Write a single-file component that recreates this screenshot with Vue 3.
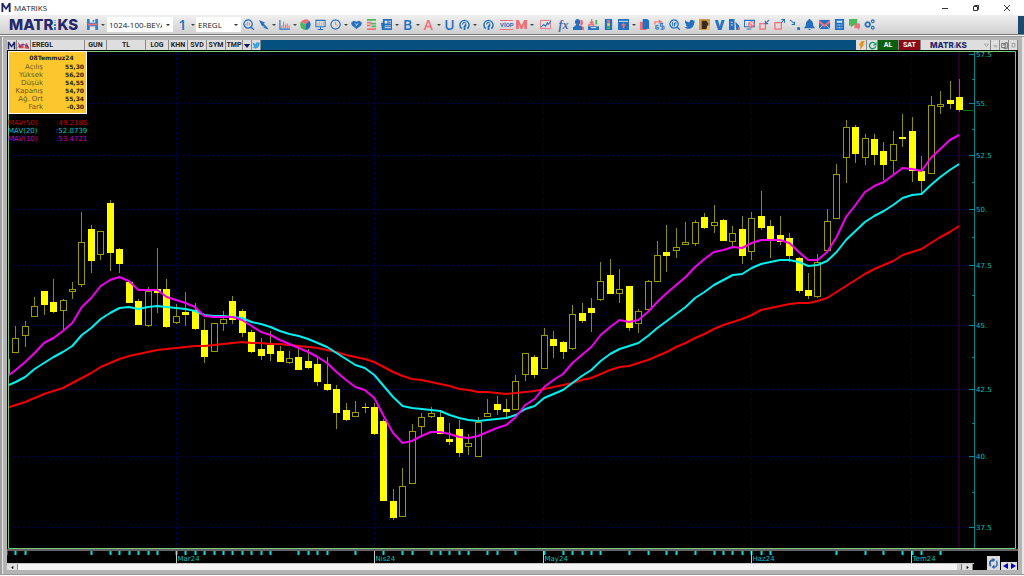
<template>
  <div class="app">
    <!-- title bar -->
    <header class="titlebar">
      <svg class="app-mark" viewBox="0 0 12 12"><path d="M1 11V1h2l3 5 3-5h2v10H9V5L6 9 3 5v6z" fill="#1f2466" /></svg>
      <span class="app-name">MATRIKS</span>
      <div class="win-buttons">
        <button aria-label="Minimize"><svg viewBox="0 0 10 10"><path d="M2 5.5h6" /></svg></button>
        <button aria-label="Restore"><svg viewBox="0 0 10 10"><path d="M2.500 3.500h4v4h-4zM3.500 3v-.500h4v4H7" /></svg></button>
        <button aria-label="Close"><svg viewBox="0 0 10 10"><path d="M2 2l6 6M8 2L2 8" /></svg></button>
      </div>
    </header>

    <!-- main toolbar -->
    <nav class="toolbar">
      <div class="brand">MATR<svg class="brand-i" viewBox="0 0 4 12"><path d="M1 1h2v1H1zM1 3h2v1H1z" fill="#5bb8e8" /><path d="M1 5h2v2H1zM1 8h2v3H1z" fill="#2f7fc4" /></svg>KS</div>
      <button class="tool drop save" aria-label="Kaydet">
        <svg class="icon" viewBox="0 0 12 12">
          <path d="M0 0h12v12H0z" fill="#2b7fd0" />
          <path d="M3 0h6v4H3z" fill="#f4f4f4" />
          <path d="M6 1h2v2H6z" fill="#2b7fd0" />
          <path d="M1 5h10v2H1z" fill="#f07078" />
          <path d="M3 8h6v4H3z" fill="#e8e8e8" />
        </svg>
        <i class="caret"></i>
      </button>
      <div class="combo page-combo">
        <select aria-label="Sayfa"><option>1024-100-BEYAZ</option></select>
      </div>
      <button class="tool drop one"><span class="glyph blue">1</span><i class="caret"></i></button>
      <div class="combo symbol-combo">
        <select aria-label="Sembol"><option>EREGL</option></select>
      </div>
      <div
        v-for="(group, g) in toolGroups"
        :key="g"
        class="tool-group"
        :class="{ even: g === toolGroups.length - 1 }"
      >
        <button v-for="t in group" :key="t.id" class="tool" :class="{ drop: t.drop }" :aria-label="t.id">
          <span v-if="t.text" class="glyph" :class="t.cls">{{ t.text }}</span>
          <svg v-else class="icon" viewBox="0 0 12 12">
            <path
              v-for="(p, i) in t.paths"
              :key="i"
              :d="p[1]"
              :fill="p[2] ? 'none' : p[0]"
              :stroke="p[2] ? p[0] : 'none'"
              :stroke-width="p[2] || 0"
            />
          </svg>
          <i v-if="t.drop" class="caret"></i>
        </button>
      </div>
      <div class="edge"></div>
    </nav>

    <!-- chart window -->
    <main class="window">
      <div class="chart-bar">
        <button class="cell mark" aria-label="M"><svg viewBox="0 0 12 12"><path d="M1 11V1h2l3 5 3-5h2v10H9V5L6 9 3 5v6z" fill="#1f2466" /></svg></button>
        <button class="cell link" aria-label="Grup">
          <svg viewBox="0 0 14 10"><path d="M1 1l3 4 3-3v6H2z" fill="#d8404c" /><path d="M8 8l2-6 3 4v3z" fill="#d8404c" /><path d="M1 7c3-4 8-4 12 0" fill="none" stroke="#334499" stroke-width="1" /></svg>
        </button>
        <button v-for="b in barCells" :key="b.text" class="cell" :class="b.cls">{{ b.text }}</button>
        <button class="cell small" aria-label="Menü"><svg viewBox="0 0 10 10"><path d="M1 3h8L5 8z" fill="#14145c" /></svg></button>
        <button class="cell small" aria-label="Twitter"><svg viewBox="0 0 12 12"><path :d="bird" fill="#35a7e0" /></svg></button>
        <div class="bar-space"></div>
        <button class="cell tiny" aria-label="Hızlı"><svg viewBox="0 0 10 10"><path d="M5 0h4L6 4h2L3 10l1-5H2z" fill="#e8920c" /></svg></button>
        <button class="cell tiny" aria-label="Yenile"><svg viewBox="0 0 10 10"><path d="M8 3a3.500 3.500 0 1 0 .5 3" fill="none" stroke="#1d9a76" stroke-width="1.600" /><path d="M9.500 1v4h-4z" fill="#1d9a76" /></svg></button>
        <button class="cell buy">AL</button>
        <button class="cell sell">SAT</button>
        <div class="bar-brand">MATR<svg class="brand-i" viewBox="0 0 4 12"><path d="M1 1h2v2H1z" fill="#5bb8e8" /><path d="M1 5h2v6H1z" fill="#2f7fc4" /></svg>KS</div>
        <button class="cell ctl" aria-label="Küçült"><svg viewBox="0 0 10 10"><path d="M2 3h6L5 7z" fill="none" stroke="#999" /></svg></button>
        <button class="cell ctl" aria-label="Simge"><svg viewBox="0 0 10 10"><path d="M3 5h4v2H3z" fill="none" stroke="#999" /></svg></button>
        <button class="cell ctl" aria-label="Düzen"><svg viewBox="0 0 10 10"><path d="M1 2h5v6H1zM3 4h3M6 1h3v8H4" fill="none" stroke="#444" /></svg></button>
        <button class="cell ctl" aria-label="Kapat"><svg viewBox="0 0 10 10"><path d="M3 2h4v5H3z" fill="none" stroke="#888" /></svg></button>
      </div>

      <section class="chart">
        <svg class="plot" viewBox="7 50 1011 514">
          <path class="grid" :d="gridPath" />
          <path class="cursor" d="M959 51V548" />
          <path class="axis" :d="axisPath" />
          <text v-for="p in prices" :key="p.y" class="axis-text" x="976" :y="p.y + 3">{{ p.label }}</text>
          <path class="last" d="M963 110.500H973" />

          <g clip-path="url(#plot-area)">
            <g v-for="(c, i) in candles" :key="i">
              <path class="wick" :class="{ now: i === candles.length - 1 }" :d="wick(c, i)" />
              <rect
                :class="c[4] ? 'down' : 'up'"
                :x="px(i) - (c[4] ? 3.500 : 3)"
                :y="c[4] ? c[1] : c[1] + 0.5"
                :width="c[4] ? 7 : 6"
                :height="Math.max(c[2] - c[1], 1)"
              />
            </g>
            <polyline class="ma red" :points="line(ma50)" />
            <polyline class="ma cyan" :points="line(ma20)" />
            <polyline class="ma magenta" :points="line(ma10)" />
          </g>
          <clipPath id="plot-area"><rect x="9" y="52" width="965" height="496" /></clipPath>

          <path class="border" d="M8.500 548.500V51.500H1015.500V548.500Z" />
          <path class="base" d="M7 550H1018" />
          <rect v-for="d in dayTicks" :key="d" class="day" :x="px(d) - 1" y="551" width="2" height="4" />
          <g v-for="m in months" :key="m.label">
            <path class="base" :d="`M${m.x} 551V563`" />
            <text class="axis-text" :x="m.x + 1" y="561">{{ m.label }}</text>
          </g>
          <path class="base" d="M7 563.500H974" />
        </svg>

        <div class="legend">
          <table class="quote">
            <caption>08Temmuz24</caption>
            <tbody>
              <tr v-for="q in quote" :key="q[0]">
                <th scope="row">{{ q[0] }}</th>
                <td>{{ q[1] }}</td>
              </tr>
            </tbody>
          </table>
          <ul class="mavs">
            <li v-for="m in mavs" :key="m.name" :class="m.cls"><span>{{ m.name }}</span><span>:{{ m.value }}</span></li>
          </ul>
        </div>
      </section>

      <footer class="scroller">
        <button class="scroll-btn" aria-label="Sola"><svg viewBox="0 0 6 6"><path d="M4 1v4L1.500 3z" /></svg></button>
        <div class="track"></div>
        <button class="thumb" aria-label="Kaydır"></button>
        <button class="scroll-btn" aria-label="Sağa"><svg viewBox="0 0 6 6"><path d="M2 1v4l2.500-2z" /></svg></button>
        <div class="corner">
          <button class="sync" aria-label="Güncelle">
            <svg viewBox="0 0 12 12"><path d="M6 2C2 2 1 6 3 9" fill="none" stroke="#2d5fa8" stroke-width="2" /><path d="M6 10c4 0 5-4 3-7" fill="none" stroke="#4a86c8" stroke-width="2" /><path d="M5 0l3 2-3 3zM7 12l-3-2 3-3z" fill="#2d5fa8" /></svg>
          </button>
          <button class="step" aria-label="Geri"><svg viewBox="0 0 7 8"><path d="M6 1v6L1 4z" /></svg></button>
          <button class="step" aria-label="İleri"><svg viewBox="0 0 7 8"><path d="M1 1v6l5-3z" /></svg></button>
        </div>
      </footer>
    </main>
  </div>
</template>

<script setup>
const B = '#2470c0'
const R = '#f0707a'
const G = '#4bb85a'

const bird = 'M0 9c2 .5 3 0 4-1-2 0-2-1-2-2h1C1 5 1 4 1 3l1 .5C1 2.500 1 2 1.500 1 3 3 4 3.500 6 3.500 6 1 9 0 10.500 2L12 1.500 11 3l1 0-1 1.500C11 9 6 13 0 9z'
const lens = [B, 'M5.500 1a4.500 4.500 0 1 0 .1 0zM9 9l3 3', 1.4]
const gauge = [
  [B, 'M3 10.500a5 5 0 1 1 6 0', 1.6],
  [B, 'M5 12V8l3-4 0 4-1 1v3z'],
  [B, 'M3.500 6l2-2.500 2 1', 1.2]
]

// 工具栏图标: [颜色, 路径, 线宽]，没有线宽则为填充
const toolGroups = [
  [
    { id: 'Ara', paths: [lens, [R, 'M3 7V5M5 7V3M7 7V4', 1]] },
    { id: 'İmleç', drop: true, paths: [[B, 'M1 1l7 3-2 1 5 5-1 1-5-4 0 2z'], [B, 'M6 9l5 2', 1]] },
    { id: 'Grafik', drop: true, paths: [[B, 'M1 1v10h11', 1.2], [R, 'M3 10V7M5 10V3M7 10V6M9 10V5M11 10V7', 1.2]] },
    { id: 'Pasta', paths: [[R, 'M6 6L1 3a6 6 0 0 1 9-1z'], [G, 'M6 6L1 3a6 6 0 0 0 5 9z'], [B, 'M6 6l4-4a6 6 0 0 1-4 10z']] },
    { id: 'Ekran', paths: [[B, 'M1 1.500h10v7H1zM6 9v2M3 11.500h6', 1.1], ['#e8a060', 'M3 7V4M5 7V3M7 7V4M9 7V3', 1]] },
    { id: 'Saat', drop: true, paths: [[B, 'M6 1a5 5 0 1 0 .1 0z', 1.3], [R, 'M6 3v3l2 1', 1]] },
    { id: 'Aracı', paths: [[B, 'M0 4l3-2 3 1 3-1 3 2-1 3-5 4-5-4z'], ['#e4e4e4', 'M4 5l2 1 2-1M5 8l2-2', 0.8]] },
    { id: 'Derinlik', paths: [[G, 'M1 0h10v2H1zM5 4h6v2H5zM6 7h5v2H6z'], [R, 'M1 3h5v2H1zM1 6h4v2H1zM1 10h10v2H1z']] },
    { id: 'Haber', drop: true, paths: [[B, 'M2 0h10v12H1L0 4h2z'], ['#e8e8e8', 'M4 2h3v3H4zM8 2h3v1H8zM8 4h3v1H8zM4 7h7v1H4zM4 9h7v1H4z']] },
    { id: 'Al', text: 'B', cls: 'blue', drop: true },
    { id: 'Analiz', text: 'A', cls: 'pink', drop: true },
    { id: 'Uyarı', text: 'U', cls: 'blue' },
    { id: 'Gösterge', drop: true, paths: gauge }
  ],
  [{ id: 'Hız', paths: gauge }],
  [
    { id: 'Viop', text: 'VİOP', cls: 'viop' },
    { id: 'Matriks', drop: true, paths: [[R, 'M0 1h3l3 6 3-6h3v10H9V6l-2 5H5L3 6v5H0z']] }
  ],
  [{ id: 'Trend', paths: [[R, 'M.5 1.500h11v9H.5z', 1], [B, 'M1 9l3-3 2 2 2-4 1 2 3-4', 1.1]] }],
  [
    { id: 'Formül', text: 'fx', cls: 'fx' },
    { id: 'Kişiler', paths: [[R, 'M8 1a2.500 3 0 0 1 1 6l3 2v3H8z'], [B, 'M5 0a3 3.500 0 0 1 1.500 6.500L10 9v3H0V9l3.500-2.500A3 3.500 0 0 1 5 0z']] },
    { id: 'Takas', paths: [[R, 'M4 0v4M2 3l2 2 2-2M1 6h5v3H1z', 1.5], [G, 'M8 1l2 0v5H8z'], [B, 'M0 8h12v4H0z'], ['#fff', 'M3 9h6v1H3z']] },
    { id: 'Işık', paths: [[B, 'M2 0h8v12H2z'], [R, 'M4.500 1h3v3h-3z'], ['#f3d34a', 'M4.500 4.500h3v3h-3z'], [G, 'M4.500 8h3v3h-3z']] },
    { id: 'Yükle', drop: true, paths: [[B, 'M0 0h12v12H0z'], ['#eee', 'M1 2h10v1H1z'], [R, 'M6 4l3 3H7v3H5V7H3z']] }
  ],
  [
    { id: 'Kopya', paths: [[R, 'M1 3h7v9H1z'], [B, 'M4 0h5l2 2v9H4z']] },
    { id: 'Döviz', paths: [[R, 'M1 6V3h6M5 1l3 2-3 2', 1.3], [B, 'M5 7H2v4h3V9H2M10 5H7v3h4v3H7M9 4v8', 1]] },
    { id: 'Bul', paths: [lens, [B, 'M4 3v5M6 4v4M7.500 3v3', 1.1]] },
    { id: 'Tweet', paths: [[B, bird]] },
    { id: 'Defter', paths: [['#c99a4a', 'M0 0h12v12H0z'], ['#3a2a18', 'M3 2h5l2 3v6H3z'], ['#e0bc74', 'M9 7h3v5H8z']] },
    { id: 'V', text: 'V', cls: 'blue heavy' },
    { id: 'Rapor', paths: [[B, 'M0 0h6v12H0zM7 3l4 4v5H8z'], ['#eee', 'M2 3h2v1H2zM2 6h2v1H2z'], [R, 'M10 9h2v3h-2z']] },
    { id: 'Kayıt', paths: [[B, 'M.5 1.500h11v7H.5zM3 11h5', 1.1], [R, 'M8 3a3 3 0 1 0 .1 0zM6 5l4 3', 1.3]] },
    { id: 'Daralt', paths: [[R, 'M1 5h6v6H1z', 1.4], [B, 'M11 1L8 4M7 2v3h3', 1.2]] },
    { id: 'Genişlet', paths: [[R, 'M1 4h7v7H1z', 1.4], [B, 'M8 4l3-3M8 .5h3.500V4', 1.2]] },
    { id: 'Taşı', paths: [[B, 'M1 1l5 4M3 6h3V3', 1.1], [B, 'M9 9h3v3H9z']] },
    { id: 'Alarm', paths: [[B, 'M5 0h2v1c3 1 3 4 3 6l2 3H0l2-3c0-2 0-5 3-6zM5 11h2v1H5z']] },
    { id: 'Posta', paths: [[B, 'M0 1h12v10H0z'], [R, 'M0 1l6 5 6-5v3L6 9 0 4z'], ['#eee', 'M0 11l4-4M12 11L8 7', 0.8]] },
    { id: 'Hesap', paths: [[B, 'M1 0h10v12H1z'], ['#d8e4f0', 'M3 2h6v2H3zM3 6h1v1H3zM5 6h2v1H5zM8 6h1v1H8zM3 9h1v1H3zM5 9h2v1H5zM8 9h1v1H8z']] },
    { id: 'Sohbet', paths: [[G, 'M0 0h9v7H5L2 9V7H0z'], [R, 'M6 5h6v5h-1v2L9 10H6z']] },
    { id: 'Ayarlar', paths: [[B, 'M4 3.500a2.500 2.500 0 1 0 .1 0z', 2], [B, 'M9.500 1a1.500 1.500 0 1 0 .1 0zM9.500 8a1.500 1.500 0 1 0 .1 0z', 1.2]] }
  ]
]

const barCells = [
  { text: 'EREGL', cls: 'w-name' },
  { text: 'GUN', cls: 'w-gun' },
  { text: 'TL', cls: 'w-tl' },
  { text: 'LOG', cls: 'w-log' },
  { text: 'KHN', cls: 'w-std' },
  { text: 'SVD', cls: 'w-std' },
  { text: 'SYM', cls: 'w-std' },
  { text: 'TMP', cls: 'w-tmp' }
]

const quote = [
  ['Açılış', '55,30'],
  ['Yüksek', '56,20'],
  ['Düşük', '54,55'],
  ['Kapanış', '54,70'],
  ['Ağ. Ort', '55,34'],
  ['Fark', '-0,30']
]

const mavs = [
  { name: 'MAV(50)', value: '49.2185', cls: 'm50' },
  { name: 'MAV(20)', value: '52.0739', cls: 'm20' },
  { name: 'MAV(10)', value: '53.4721', cls: 'm10' }
]

const prices = [
  { y: 54, label: '57.5' },
  { y: 103, label: '55.' },
  { y: 155, label: '52.5' },
  { y: 209, label: '50.' },
  { y: 265, label: '47.5' },
  { y: 325, label: '45.' },
  { y: 389, label: '42.5' },
  { y: 456, label: '40.' },
  { y: 527, label: '37.5' }
]

const months = [
  { x: 176.5, label: 'Mar24' },
  { x: 374.5, label: 'Nis24' },
  { x: 543.5, label: 'May24' },
  { x: 751.5, label: 'Haz24' },
  { x: 911.5, label: 'Tem24' }
]

const dayTicks = [
  0, 1, 2, 9, 11, 12, 13, 14, 15, 16, 18, 19, 20, 21, 22, 23, 24, 25, 26, 27, 28, 31, 32, 33, 34,
  37, 40, 42, 43, 45, 46, 47, 48, 49, 51, 52, 54, 57, 59, 60, 61, 62, 63, 66, 68, 70, 71, 73, 75,
  76, 77, 78, 79, 80, 81, 88, 91, 93, 95, 96, 97, 99
]

// 每根K线: [最高, 实体上沿, 实体下沿, 最低, 是否下跌]
const candles = [
  [359, 359, 373, 373, 0], [326, 338, 352, 352, 0], [321, 326, 335, 347, 0], [297, 306, 316, 316, 0],
  [291, 291, 305, 315, 1], [279, 302, 312, 313, 1], [299, 300, 310, 330, 0], [282, 289, 291, 299, 0],
  [212, 242, 284, 287, 0], [225, 229, 261, 273, 1], [231, 231, 254, 260, 0], [200, 203, 253, 271, 1],
  [248, 249, 264, 273, 1], [282, 282, 303, 303, 1], [299, 301, 325, 325, 1], [287, 291, 325, 327, 0],
  [248, 289, 293, 313, 1], [279, 289, 327, 328, 1], [304, 316, 322, 324, 0], [292, 312, 315, 326, 1],
  [303, 310, 329, 330, 1], [319, 330, 357, 363, 1], [323, 323, 351, 352, 0], [311, 319, 323, 331, 0],
  [296, 301, 320, 324, 1], [309, 311, 333, 337, 1], [330, 332, 352, 353, 1], [338, 349, 356, 360, 1],
  [331, 345, 354, 361, 1], [346, 351, 362, 362, 1], [351, 358, 362, 364, 0], [348, 357, 370, 370, 1],
  [349, 361, 368, 369, 1], [358, 364, 382, 386, 1], [357, 384, 390, 391, 1], [385, 389, 413, 429, 1],
  [403, 410, 420, 421, 1], [401, 412, 416, 416, 0], [403, 407, 408, 413, 1], [403, 407, 434, 435, 1],
  [419, 421, 501, 501, 1], [489, 501, 518, 520, 1], [468, 486, 516, 516, 0], [424, 431, 483, 483, 0],
  [413, 417, 426, 436, 0], [407, 413, 416, 418, 0], [411, 417, 434, 434, 1], [423, 439, 442, 445, 1],
  [420, 429, 453, 457, 1], [434, 443, 446, 455, 0], [417, 422, 456, 456, 0], [399, 413, 416, 416, 0],
  [396, 404, 410, 415, 1], [399, 409, 412, 418, 1], [375, 381, 409, 409, 0], [353, 353, 374, 381, 0],
  [355, 357, 375, 378, 1], [328, 335, 368, 368, 0], [331, 339, 346, 358, 1], [341, 342, 352, 359, 1],
  [305, 314, 348, 350, 0], [303, 313, 321, 323, 1], [298, 308, 313, 332, 1], [262, 281, 299, 301, 0],
  [259, 275, 294, 294, 1], [269, 289, 293, 303, 0], [286, 286, 328, 331, 1], [309, 311, 323, 333, 0],
  [280, 281, 309, 309, 0], [241, 255, 281, 281, 0], [225, 252, 256, 272, 1], [228, 247, 250, 258, 0],
  [222, 242, 244, 244, 0], [220, 222, 243, 246, 0], [213, 217, 228, 229, 1], [205, 222, 225, 233, 0],
  [219, 220, 241, 241, 1], [226, 233, 241, 247, 0], [216, 229, 256, 264, 1], [212, 218, 251, 260, 0],
  [191, 216, 228, 230, 1], [220, 226, 239, 258, 1], [216, 235, 242, 245, 1], [233, 238, 256, 262, 1],
  [257, 258, 291, 293, 1], [273, 290, 296, 299, 1], [254, 262, 296, 298, 0], [209, 221, 250, 251, 0],
  [164, 174, 218, 218, 0], [120, 127, 157, 183, 0], [125, 127, 154, 163, 1], [134, 138, 157, 165, 0],
  [134, 139, 155, 165, 1], [142, 151, 165, 180, 1], [131, 144, 160, 175, 0], [114, 137, 139, 147, 1],
  [117, 131, 171, 182, 1], [156, 171, 181, 194, 1], [96, 105, 173, 174, 0], [91, 104, 106, 114, 0],
  [81, 100, 104, 109, 1], [79, 97, 110, 112, 1]
]

// 均线
const ma10 = [
  377, 370, 362, 353, 343, 338, 331, 323, 307, 298, 286, 280, 277, 281, 290, 290, 290, 297, 300, 303,
  307, 316, 317, 317, 317, 320, 326, 332, 335, 340, 344, 348, 352, 357, 363, 372, 380, 387, 390, 398,
  416, 433, 443, 441, 436, 432, 432, 434, 437, 438, 436, 432, 428, 425, 417, 405, 399, 387, 380, 374,
  363, 355, 347, 335, 327, 320, 322, 320, 312, 302, 293, 285, 277, 267, 259, 252, 250, 247, 248, 243,
  240, 240, 240, 243, 252, 260, 260, 252, 237, 217, 205, 192, 186, 182, 175, 168, 169, 171, 158, 149,
  140, 135
]
const ma20 = [
  386, 382, 377, 369, 363, 357, 352, 346, 335, 328, 319, 313, 308, 307, 309, 307, 306, 307, 308, 309,
  311, 315, 316, 316, 317, 318, 322, 324, 327, 331, 334, 336, 339, 343, 347, 353, 359, 365, 368, 375,
  386, 397, 406, 408, 409, 410, 411, 415, 418, 420, 421, 420, 419, 418, 415, 409, 406, 398, 394, 390,
  383, 376, 370, 361, 354, 349, 346, 343, 336, 328, 321, 314, 307, 298, 292, 285, 280, 275, 274, 268,
  264, 262, 260, 260, 262, 266, 265, 261, 252, 240, 231, 222, 216, 211, 205, 198, 195, 194, 185, 177,
  170, 164
]
const ma50 = [
  408, 405, 402, 398, 394, 391, 388, 383, 378, 373, 367, 363, 359, 356, 354, 352, 350, 349, 348, 347,
  346, 346, 345, 344, 343, 342, 343, 343, 344, 344, 345, 346, 347, 348, 350, 352, 355, 357, 359, 362,
  367, 372, 376, 379, 380, 382, 384, 386, 389, 390, 392, 392, 393, 394, 393, 392, 391, 389, 387, 385,
  383, 380, 378, 374, 370, 367, 366, 363, 360, 356, 352, 347, 343, 338, 334, 329, 325, 322, 319, 315,
  310, 308, 306, 304, 303, 303, 301, 298, 292, 286, 280, 274, 269, 265, 261, 255, 252, 249, 243, 237,
  232, 226
]

const step = 9.435
const px = (i) => Math.round(6 + i * step) + 0.5
const line = (values) => values.map((y, i) => `${(6.3 + i * step).toFixed(1)},${y}`).join(' ')

// 空心K线的影线不穿过实体
const wick = (c, i) => {
  const x = px(i)
  if (c[4]) return `M${x} ${c[0]}V${c[3]}`
  return `M${x} ${c[0]}V${c[1]}M${x} ${c[2]}V${c[3]}`
}

const gridPath = [
  ...prices.map((p) => `M12 ${p.y + 0.5}H969`),
  ...months.map((m) => `M${m.x} 52V547`)
].join('')

const axisPath = 'M974.5 52V548' + prices.map((p, i) => {
  const next = prices[i + 1]
  const half = next ? `M972 ${Math.round((p.y + next.y) / 2) + 0.5}H974` : ''
  return `M969 ${p.y + 0.5}H974${half}`
}).join('')
</script>

<style>
html,
body {
  margin: 0;
  background: #fff;
}
</style>

<style scoped>
.app {
  display: flex;
  flex-direction: column;
  min-height: 100vh;
  font-family: "Open Sans", "Noto Sans", sans-serif;
  color: #222;
}
button {
  display: flex;
  align-items: center;
  justify-content: center;
  margin: 0;
  padding: 0;
  border: 0;
  background: none;
  font: inherit;
  cursor: pointer;
}
svg {
  display: block;
}
.titlebar {
  display: flex;
  align-items: center;
  height: 15px;
  font-size: 8px;
}
.app-mark {
  width: 12px;
  height: 11px;
}
.app-name {
  margin-left: 2px;
}
.win-buttons {
  display: flex;
  margin-left: auto;
  padding-right: 2px;
}
.win-buttons button {
  width: 31px;
  height: 15px;
}
.win-buttons svg {
  width: 10px;
  height: 10px;
  fill: none;
  stroke: #333;
  stroke-width: 1;
}

/* toolbar */
.toolbar {
  display: flex;
  align-items: center;
  height: 19px;
  padding-left: 9px;
  background: linear-gradient(#f0f0f0, #cfcfcf);
  border-bottom: 1px solid #777;
}
.brand,
.bar-brand {
  display: flex;
  align-items: center;
  font-family: Inter, sans-serif;
  font-weight: 800;
  color: #26286c;
}
.brand {
  width: 77px;
  font-size: 15px;
  line-height: 18px;
}
.brand-i {
  width: 4px;
  height: 12px;
}
.tool {
  flex: none;
  width: 15px;
  height: 18px;
}
.tool.drop {
  width: 21px;
  justify-content: flex-start;
  padding-left: 2px;
}
.tool.save {
  padding-left: 1px;
}
.tool.one {
  width: 23px;
  padding-left: 4px;
}
.icon {
  flex: none;
  width: 11px;
  height: 11px;
}
.caret {
  flex: none;
  margin-left: 3px;
  border: 2px solid transparent;
  border-top: 2px solid #444;
  border-bottom: 0;
}
.glyph {
  flex: none;
  width: 11px;
  text-align: center;
  font-size: 14px;
  font-weight: 600;
  line-height: 16px;
}
.blue {
  color: #2470c0;
}
.heavy {
  font-weight: 800;
}
.pink {
  color: #f0707a;
}
.viop {
  width: 13px;
  font-family: Roboto, sans-serif;
  font-size: 6px;
  font-weight: 700;
  line-height: 8px;
  color: #2470c0;
  border-top: 1px solid #f0707a;
  border-bottom: 1px solid #f0707a;
}
.fx {
  font-family: "Liberation Serif", serif;
  font-size: 12px;
  font-style: italic;
  color: #4a68b0;
}
.combo {
  position: relative;
  height: 15px;
  background: #fff;
}
.combo::after {
  content: "";
  position: absolute;
  top: 7px;
  right: 3px;
  border: 2px solid transparent;
  border-top: 2px solid #333;
  border-bottom: 0;
  pointer-events: none;
}
.combo select {
  display: block;
  box-sizing: border-box;
  appearance: none;
  width: 100%;
  height: 15px;
  margin: 0;
  padding: 0 11px 0 2px;
  border: 0;
  border-radius: 0;
  background: none;
  font-family: "Open Sans", sans-serif;
  font-size: 8px;
  line-height: 15px;
  color: #222;
}
.page-combo {
  width: 66px;
}
.symbol-combo {
  width: 45px;
}
.tool-group {
  display: flex;
  margin-left: 3px;
}
.combo + .tool-group {
  margin-left: 0;
}
.tool-group.even {
  flex: 0 1 235px;
  margin-left: 0;
}
.even .tool {
  flex: 1;
}
.edge {
  width: 6px;
  height: 18px;
  margin-left: auto;
  background: #1d4a6c;
}

/* chart window */
.window {
  flex: 1;
  display: flex;
  flex-direction: column;
  margin-bottom: 1px;
  padding: 4px 6px 4px 7px;
  border-top: 1px solid #f4f4f4;
  border-bottom: 1px solid #999;
  background: #b4b4b4;
  box-shadow: inset 0 1px #9a9a9a, inset 2px 0 #a0a0a0, inset 3px 0 #e6e6e6, inset -2px 0 #e6e6e6;
}
.chart-bar {
  display: flex;
  height: 10px;
  background: #05507f;
  font-family: Roboto, sans-serif;
  font-size: 7px;
  font-weight: 700;
}
.cell {
  flex: none;
  box-sizing: border-box;
  height: 10px;
  border-right: 1px solid #888;
  background: #dedede;
  color: #222;
  line-height: 10px;
}
.cell svg {
  width: 9px;
  height: 9px;
}
.mark {
  width: 10px;
}
.link {
  width: 14px;
}
.link svg {
  width: 13px;
}
.w-name {
  width: 54px;
  justify-content: flex-start;
  padding-left: 1px;
}
.w-gun {
  width: 22px;
}
.w-tl {
  width: 39px;
}
.w-log {
  width: 23px;
}
.w-std {
  width: 19px;
}
.w-tmp {
  width: 17px;
}
.small {
  width: 9px;
}
.bar-space {
  flex: 1;
}
.tiny {
  width: 11px;
}
.buy,
.sell {
  width: 21px;
  color: #fff;
}
.buy {
  background: #0b6010;
}
.sell {
  width: 22px;
  background: #8c0a14;
}
.bar-brand {
  box-sizing: border-box;
  width: 61px;
  height: 10px;
  padding-left: 9px;
  background: #dedede;
  font-size: 8px;
}
.bar-brand .brand-i {
  width: 2px;
  height: 7px;
}
.ctl {
  width: 9px;
}
.ctl svg {
  width: 7px;
  height: 7px;
}
.chart {
  position: relative;
  flex: 1;
  background: #000;
}
.plot {
  width: 100%;
  height: auto;
}
.grid {
  fill: none;
  stroke: #00004a;
  stroke-width: 1;
  stroke-dasharray: 3 2;
}
.cursor {
  stroke: #4a0048;
  stroke-width: 1;
}
.axis {
  fill: none;
  stroke: #008a8a;
  stroke-width: 1;
}
.axis-text {
  fill: #00c0c0;
  font-family: "DejaVu Sans", sans-serif;
  font-size: 7px;
}
.last {
  stroke: #007800;
}
.wick {
  stroke: #8c8c00;
  stroke-width: 1;
}
.wick.now {
  stroke: #3c8c3c;
}
.up {
  fill: #000;
  stroke: #9a9a00;
  stroke-width: 1;
}
.down {
  fill: #ff0;
}
.ma {
  fill: none;
  stroke-width: 2;
  stroke-linejoin: round;
}
.red {
  stroke: #f00000;
}
.cyan {
  stroke: #00f0f0;
}
.magenta {
  stroke: #f000f0;
}
.border {
  fill: none;
  stroke: #78c878;
}
.base {
  stroke: #c8c8c8;
}
.day {
  fill: #00e0e0;
}
.legend {
  position: absolute;
  top: 1px;
  left: 1px;
  font-family: "DejaVu Sans", sans-serif;
  font-size: 7px;
}
.quote {
  width: 79px;
  padding: 1px 2px 2px;
  border: 1px solid #fff;
  border-top: 0;
  border-spacing: 0;
  background: #fcc72c;
}
.quote th,
.quote td {
  height: 8px;
  padding: 0;
  line-height: 8px;
  text-align: right;
}
.quote th {
  width: 32px;
  font-weight: 400;
  color: #6b5a20;
}
.quote td {
  font-size: 6px;
  font-weight: 700;
  color: #2b2200;
}
.quote caption {
  height: 10px;
  padding-left: 8px;
  border: 1px solid #fff;
  border-bottom: 0;
  line-height: 12px;
  background: #fcc72c;
  font-size: 6px;
  font-weight: 700;
}
.mavs {
  margin: 5px 0 0;
  padding: 0;
  list-style: none;
}
.mavs li {
  display: flex;
  height: 8px;
  line-height: 8px;
}
.mavs span:first-child {
  width: 48px;
}
.m50 {
  color: #c80000;
}
.m20 {
  color: #00c8c8;
}
.m10 {
  color: #c800c8;
}

/* bottom scroll bar */
.scroller {
  position: relative;
  display: flex;
  height: 6px;
  padding-right: 45px;
  background: #000;
}
.track {
  flex: 1;
  background: #f4f4f4;
}
.scroll-btn {
  width: 11px;
  height: 6px;
  background: #e0e0e0;
  border-right: 1px solid #888;
}
.scroll-btn svg {
  width: 5px;
  height: 5px;
}
.thumb {
  width: 5px;
  height: 6px;
  background: #d0d0d0;
  border-right: 1px solid #777;
}
.corner {
  position: absolute;
  right: 1px;
  bottom: 0;
  display: flex;
  align-items: flex-end;
}
.sync {
  width: 13px;
  height: 14px;
  margin-right: 1px;
  background: #dcdcdc;
}
.sync svg {
  width: 11px;
  height: 11px;
}
.step {
  width: 8px;
  height: 8px;
  background: #e0e0e0;
  fill: #0000c0;
}
.step svg {
  width: 7px;
  height: 8px;
}
</style>
